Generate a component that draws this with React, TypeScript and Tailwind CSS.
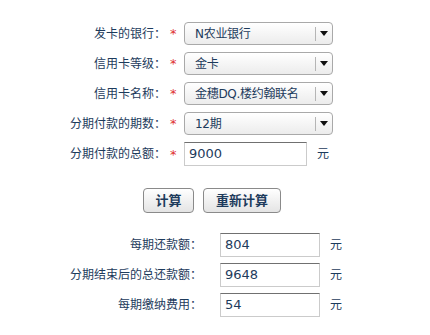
import React from 'react';

const font = { fontFamily: '"DejaVu Sans", "Noto Sans CJK SC", sans-serif' };

const Select: React.FC<{ value: string }> = ({ value }) => (
  <div className="flex h-[23px] w-[149px] items-center rounded-[4px] border border-[#a9a9a9] bg-gradient-to-b from-white to-[#ececec]">
    <span className="flex-1 overflow-hidden whitespace-nowrap pl-[10px] text-[12px] tracking-[-0.3px] text-[#1d3b5c]">
      {value}
    </span>
    <span className="h-[14px] w-px shrink-0 bg-[#b5b5b5]" />
    <span className="flex w-[16px] shrink-0 justify-center">
      <svg width="8" height="5" viewBox="0 0 8 5">
        <path d="M0 0h8L4 5z" fill="#111" />
      </svg>
    </span>
  </div>
);

const Input: React.FC<{ value: string; w: string }> = ({ value, w }) => (
  <div
    className={`flex h-[24px] items-center border border-[#cbcbcb] border-t-[#707070] bg-white pl-[4px] text-[13px] text-[#1d3b5c] ${w}`}
  >
    {value}
  </div>
);

const TopRow: React.FC<{ label: string; children: React.ReactNode }> = ({ label, children }) => (
  <div className="flex items-center">
    <span className="w-[166px] text-right text-[12px] text-[#1d3b5c]">{label}</span>
    <span className="w-[18px] pl-[4px] text-[13px] leading-none text-[#e0302f]">*</span>
    {children}
  </div>
);

const ResultRow: React.FC<{ label: string; value: string }> = ({ label, value }) => (
  <div className="flex items-center">
    <span className="w-[202px] text-right text-[12px] text-[#1d3b5c]">{label}</span>
    <span className="w-[18px]" />
    <Input value={value} w="w-[100px]" />
    <span className="pl-[10px] text-[12px] text-[#1d3b5c]">元</span>
  </div>
);

const Btn: React.FC<{ text: string; w: string }> = ({ text, w }) => (
  <button
    className={`h-[25px] rounded-[4px] border border-[#8a8a8a] bg-gradient-to-b from-white to-[#e4e4e4] text-[13px] font-bold text-[#1d3b5c] ${w}`}
  >
    {text}
  </button>
);

export default function App() {
  return (
    <div className="h-[335px] w-[430px] bg-white" style={font}>
      <div className="flex flex-col gap-[7px] pt-[22px]">
        <TopRow label="发卡的银行：">
          <Select value="N农业银行" />
        </TopRow>
        <TopRow label="信用卡等级：">
          <Select value="金卡" />
        </TopRow>
        <TopRow label="信用卡名称：">
          <Select value="金穗DQ.楼约翰联名" />
        </TopRow>
        <TopRow label="分期付款的期数：">
          <Select value="12期" />
        </TopRow>
        <TopRow label="分期付款的总额：">
          <Input value="9000" w="w-[123px]" />
          <span className="pl-[10px] text-[12px] text-[#1d3b5c]">元</span>
        </TopRow>
      </div>
      <div className="flex gap-[9px] pl-[143px] pt-[22px]">
        <Btn text="计算" w="w-[51px]" />
        <Btn text="重新计算" w="w-[78px]" />
      </div>
      <div className="flex flex-col gap-[6px] pt-[20px]">
        <ResultRow label="每期还款额：" value="804" />
        <ResultRow label="分期结束后的总还款额：" value="9648" />
        <ResultRow label="每期缴纳费用：" value="54" />
      </div>
    </div>
  );
}
